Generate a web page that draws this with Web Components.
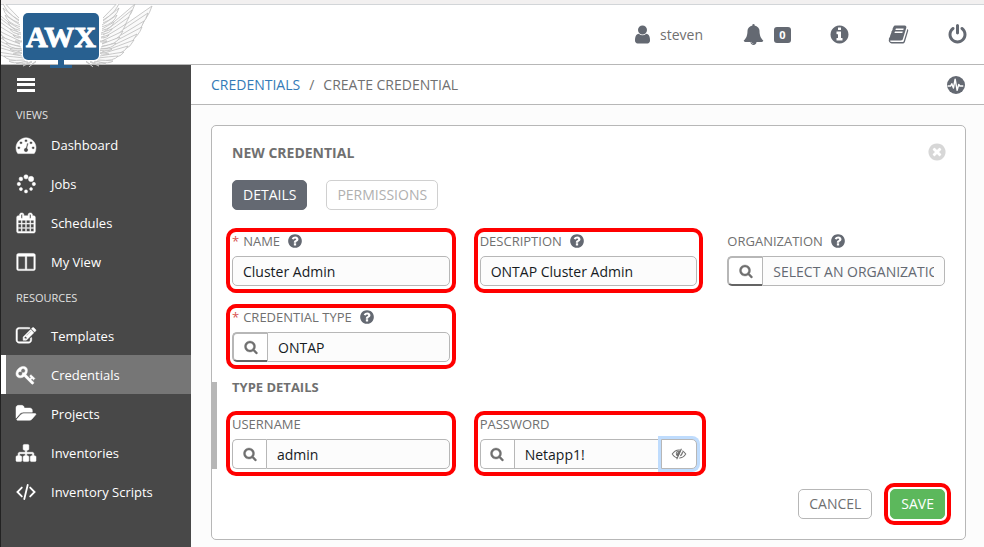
<!DOCTYPE html>
<html lang="en">
<head>
<meta charset="utf-8">
<title>AWX | Create Credential</title>
<style>
  :root { --line: #b7b7b7; --slate: #646972; --muted: #707070; --red: #f00; }
  * { box-sizing: border-box; }
  html, body { height: 100%; }
  body {
    margin: 0; background: #fcfcfc; color: var(--muted);
    font: 14px/20px "Open Sans", "Noto Sans", sans-serif;
    border-left: 1px solid #222;
  }
</style>
</head>
<body>
<awx-app></awx-app>
<script>
const RING = 'zm%M q0 209-103 385.5t-279.5 279.5-385.5 103-385.5-103-279.5-279.5-103-385.5 103-385.5 279.5-279.5 385.5-103 385.5 103 279.5 279.5 103 385.5z';
const disc = move => RING.replace('%M', move);
const p = d => `<path d="${d}"/>`;
const ICONS = {
  user: p('M1536 1399q0 109-62.5 187t-150.5 78h-854q-88 0-150.5-78t-62.5-187q0-85 8.5-160.5t31.5-152 58.5-131 94-89 134.5-34.5q131 128 313 128t313-128q76 0 134.5 34.5t94 89 58.5 131 31.5 152 8.5 160.5zm-256-887q0 159-112.5 271.5t-271.5 112.5-271.5-112.5-112.5-271.5 112.5-271.5 271.5-112.5 271.5 112.5 112.5 271.5z'),
  bell: p('M912 1696q0-16-16-16-59 0-101.5-42.5t-42.5-101.5q0-16-16-16t-16 16q0 73 51.5 124.5t124.5 51.5q16 0 16-16zm816-288q0 52-38 90t-90 38h-448q0 106-75 181t-181 75-181-75-75-181h-448q-52 0-90-38t-38-90q50-42 91-88t85-119.5 74.5-158.5 50-206 19.5-260q0-152 117-282.5t307-158.5q-8-19-8-39 0-40 28-68t68-28 68 28 28 68q0 20-8 39 190 28 307 158.5t117 282.5q0 139 19.5 260t50 206 74.5 158.5 85 119.5 91 88z'),
  info: p('M1152 1376v-160q0-14-9-23t-23-9h-96v-512q0-14-9-23t-23-9h-320q-14 0-23 9t-9 23v160q0 14 9 23t23 9h96v320h-96q-14 0-23 9t-9 23v160q0 14 9 23t23 9h448q14 0 23-9t9-23zm-128-896v-160q0-14-9-23t-23-9h-192q-14 0-23 9t-9 23v160q0 14 9 23t23 9h192q14 0 23-9t9-23' + disc('640 416')),
  help: p('M1024 1376v-192q0-14-9-23t-23-9h-192q-14 0-23 9t-9 23v192q0 14 9 23t23 9h192q14 0 23-9t9-23zm256-672q0-88-55.5-163t-138.5-116-170-41q-243 0-371 213-15 24 8 42l132 100q7 6 19 6 16 0 25-12 53-68 86-92 34-24 86-24 48 0 85.5 26t37.5 59q0 38-20 61t-68 45q-63 28-115.5 86.5t-52.5 125.5v36q0 14 9 23t23 9h192q14 0 23-9t9-23q0-19 21.5-49.5t54.5-49.5q32-18 49-28.5t46-35 44.5-48 28-60.5 12.5-81' + disc('384 192')),
  close: p('M1277 1122q0-26-19-45l-181-181 181-181q19-19 19-45 0-27-19-46l-90-90q-19-19-46-19-26 0-45 19l-181 181-181-181q-19-19-45-19-27 0-46 19l-90 90q-19 19-19 46 0 26 19 45l181 181-181 181q-19 19-19 45 0 27 19 46l90 90q19 19 46 19 26 0 45-19l181-181 181 181q19 19 45 19 27 0 46-19l90-90q19-19 19-46' + disc('387-226')),
  search: p('M1216 832q0-185-131.5-316.5t-316.5-131.5-316.5 131.5-131.5 316.5 131.5 316.5 316.5 131.5 316.5-131.5 131.5-316.5zm512 832q0 52-38 90t-90 38q-54 0-90-38l-343-342q-179 124-399 124-143 0-273.5-55.5t-225-150-150-225-55.5-273.5 55.5-273.5 150-225 225-150 273.5-55.5 273.5 55.5 225 150 150 225 55.5 273.5q0 220-124 399l343 343q37 37 37 90z'),
  power: p('M1664 896q0 156-61 298t-164 245-245 164-298 61-298-61-245-164-164-245-61-298q0-182 80.5-343t226.5-270q43-32 95.5-25t83.5 50q32 42 24.5 94.5t-49.5 84.5q-98 74-151.5 181t-53.5 228q0 104 40.5 198.5t109.5 163.5 163.5 109.5 198.5 40.5 198.5-40.5 163.5-109.5 109.5-163.5 40.5-198.5q0-121-53.5-228t-151.5-181q-42-32-49.5-84.5t24.5-94.5q31-43 84-50t95 25q146 109 226.5 270t80.5 343zm-640-768v640q0 52-38 90t-90 38-90-38-38-90v-640q0-52 38-90t90-38 90 38 38 90z'),
  book: p('M1703 478q40 57 18 129l-275 906q-19 64-76.5 107.5t-122.5 43.5h-923q-77 0-148.5-53.5t-99.5-131.5q-24-67-2-127 0-4 3-27t4-37q1-8-3-21.5t-3-19.5q2-11 8-21t16.5-23.5 16.5-23.5q23-38 45-91.5t30-91.5q3-10 .5-30t-.5-28q3-11 17-28t17-23q21-36 42-92t25-90q1-9-2.5-32t.5-28q4-13 22-30.5t22-22.5q19-26 42.5-84.5t27.5-96.5q1-8-3-25.5t-2-26.5q2-8 9-18t18-23 17-21q8-12 16.5-30.5t15-35 16-36 19.5-32 26.5-23.5 36-11.5 47.5 5.5l-1 3q38-9 51-9h761q74 0 114 56t18 130l-274 906q-36 119-71.5 153.5t-128.5 34.5h-869q-27 0-38 15-11 16-1 43 24 70 144 70h923q29 0 56-15.5t35-41.5l300-987q7-22 5-57 38 15 59 43zm-1064 2q-4 13 2 22.5t20 9.5h608q13 0 25.5-9.5t16.5-22.5l21-64q4-13-2-22.5t-20-9.5h-608q-13 0-25.5 9.5t-16.5 22.5zm-83 256q-4 13 2 22.5t20 9.5h608q13 0 25.5-9.5t16.5-22.5l21-64q4-13-2-22.5t-20-9.5h-608q-13 0-25.5 9.5t-16.5 22.5z'),
  dashboard: p('M384 1152q0-53-37.5-90.5t-90.5-37.5-90.5 37.5-37.5 90.5 37.5 90.5 90.5 37.5 90.5-37.5 37.5-90.5zm192-448q0-53-37.5-90.5t-90.5-37.5-90.5 37.5-37.5 90.5 37.5 90.5 90.5 37.5 90.5-37.5 37.5-90.5zm428 481l101-382q6-26-7.5-48.5t-38.5-29.5-48 6.5-30 39.5l-101 382q-60 5-107 43.5t-63 98.5q-20 77 20 146t117 89 146-20 89-117q16-60-6-117t-72-91zm660-33q0-53-37.5-90.5t-90.5-37.5-90.5 37.5-37.5 90.5 37.5 90.5 90.5 37.5 90.5-37.5 37.5-90.5zm-640-640q0-53-37.5-90.5t-90.5-37.5-90.5 37.5-37.5 90.5 37.5 90.5 90.5 37.5 90.5-37.5 37.5-90.5zm448 192q0-53-37.5-90.5t-90.5-37.5-90.5 37.5-37.5 90.5 37.5 90.5 90.5 37.5 90.5-37.5 37.5-90.5zm320 448q0 261-141 483-19 29-54 29h-1402q-35 0-54-29-141-221-141-483 0-182 71-348t191-286 286-191 348-71 348 71 286 191 191 286 71 348z'),
  jobs: '<circle cx="896" cy="256" r="190"/><circle cx="1350" cy="440" r="235"/><circle cx="1600" cy="896" r="150"/><circle cx="1350" cy="1350" r="130"/><circle cx="896" cy="1560" r="140"/><circle cx="440" cy="1350" r="140"/><circle cx="256" cy="896" r="150"/><circle cx="440" cy="440" r="165"/>',
  schedules: p('M192 1664h288v-288h-288v288zm352 0h320v-288h-320v288zm-352-352h288v-320h-288v320zm352 0h320v-320h-320v320zm-352-384h288v-288h-288v288zm736 736h320v-288h-320v288zm-384-736h320v-288h-320v288zm768 736h288v-288h-288v288zm-384-352h320v-320h-320v320zm-352-864v-288q0-13-9.5-22.5t-22.5-9.5h-64q-13 0-22.5 9.5t-9.5 22.5v288q0 13 9.5 22.5t22.5 9.5h64q13 0 22.5-9.5t9.5-22.5zm736 864h288v-320h-288v320zm-384-384h320v-288h-320v288zm384 0h288v-288h-288v288zm32-480v-288q0-13-9.5-22.5t-22.5-9.5h-64q-13 0-22.5 9.5t-9.5 22.5v288q0 13 9.5 22.5t22.5 9.5h64q13 0 22.5-9.5t9.5-22.5zm384-64v1280q0 52-38 90t-90 38h-1408q-52 0-90-38t-38-90v-1280q0-52 38-90t90-38h128v-96q0-66 47-113t113-47h64q66 0 113 47t47 113v96h384v-96q0-66 47-113t113-47h64q66 0 113 47t47 113v96h128q52 0 90 38t38 90z'),
  view: p('M224 1536h608v-1152h-640v1120q0 13 9.5 22.5t22.5 9.5zm1376-32v-1120h-640v1152h608q13 0 22.5-9.5t9.5-22.5zm128-1216v1216q0 66-47 113t-113 47h-1344q-66 0-113-47t-47-113v-1216q0-66 47-113t113-47h1344q66 0 113 47t47 113z'),
  templates: p('M888 1184l116-116-152-152-116 116v56h96v96h56zm440-720q-16-16-33 1l-350 350q-17 17-1 33t33-1l350-350q17-17 1-33zm80 594v190q0 119-84.5 203.5t-203.5 84.5h-832q-119 0-203.5-84.5t-84.5-203.5v-832q0-119 84.5-203.5t203.5-84.5h832q63 0 117 25 15 7 18 23 3 17-9 29l-49 49q-14 14-32 8-23-6-45-6h-832q-66 0-113 47t-47 113v832q0 66 47 113t113 47h832q66 0 113-47t47-113v-126q0-13 9-22l64-64q15-15 35-7t20 29zm-96-738l288 288-672 672h-288v-288zm444 132l-92 92-288-288 92-92q28-28 68-28t68 28l152 152q28 28 28 68t-28 68z'),
  key: p('M832 512q0-80-56-136t-136-56-136 56-56 136q0 42 19 83-41-19-83-19-80 0-136 56t-56 136 56 136 136 56 136-56 56-136q0-42-19-83 41 19 83 19 80 0 136-56t56-136zm851 704q0 17-49 66t-66 49q-9 0-28.5-16t-36.5-33-38.5-40-24.5-26l-96 96 220 220q28 28 28 68 0 42-39 81t-81 39q-40 0-68-28l-671-671q-176 131-365 131-163 0-265.5-102.5t-102.5-265.5q0-160 95-313t248-248 313-95q163 0 265.5 102.5t102.5 265.5q0 189-131 365l355 355 96-96q-3-3-26-24.5t-40-38.5-33-36.5-16-28.5q0-17 49-66t66-49q13 0 23 10 6 6 46 44.5t82 79.5 86.5 86 73 78 28.5 41z'),
  folder: '<g transform="scale(.953)">' + p('M1879 952q0 31-31 66l-336 396q-43 51-120.5 86.5t-143.5 35.5h-1088q-34 0-60.5-13t-26.5-43q0-31 31-66l336-396q43-51 120.5-86.5t143.5-35.5h1088q34 0 60.5 13t26.5 43zm-343-344v160h-832q-94 0-197 47.5t-164 119.5l-337 396-5 6q0-4-.5-12.5t-.5-12.5v-960q0-92 66-158t158-66h320q92 0 158 66t66 158v32h544q92 0 158 66t66 158z') + '</g>',
  sitemap: p('M1792 1248v320q0 40-28 68t-68 28h-320q-40 0-68-28t-28-68v-320q0-40 28-68t68-28h96v-192h-512v192h96q40 0 68 28t28 68v320q0 40-28 68t-68 28h-320q-40 0-68-28t-28-68v-320q0-40 28-68t68-28h96v-192h-512v192h96q40 0 68 28t28 68v320q0 40-28 68t-68 28h-320q-40 0-68-28t-28-68v-320q0-40 28-68t68-28h96v-192q0-52 38-90t90-38h512v-192h-96q-40 0-68-28t-28-68v-320q0-40 28-68t68-28h320q40 0 68 28t28 68v320q0 40-28 68t-68 28h-96v192h512q52 0 90 38t38 90v192h96q40 0 68 28t28 68z'),
  code: '<path d="M520 500L130 896l390 396M1272 500l390 396-390 396M1050 260L742 1530" fill="none" stroke="currentColor" stroke-width="165" stroke-linecap="round"/>',
  bars: '<path shape-rendering="crispEdges" d="M90 225h1612v269H90zM90 718h1612v269H90zM90 1210h1612v269H90z"/>',
  activity: '<circle cx="896" cy="896" r="896"/><path d="M60 1000h290l130-230 160 430 170-890 200 1120 160-580 120 150h330" fill="none" stroke="#fff" stroke-width="140" stroke-linejoin="round"/>',
  eye: '<path d="M30 896q350-520 866-520 516 0 866 520-350 520-866 520-516 0-866-520z" fill="none" stroke="currentColor" stroke-width="130"/><circle cx="860" cy="840" r="370"/><path d="M800 620q-170 40-170 220" fill="none" stroke="#fff" stroke-width="80"/><path d="M1330 260L760 1560" stroke="#fff" stroke-width="170"/><path d="M1210 220L600 1560M1340 640q30 270-230 480" fill="none" stroke="currentColor" stroke-width="130"/>'
};

const RESET = '*,*::before,*::after{box-sizing:border-box}';
function define(name, css, html) {
  customElements.define(name, class extends HTMLElement {
    constructor() {
      super();
      this.attachShadow({ mode: 'open' });
    }
    connectedCallback() {
      this.shadowRoot.innerHTML = `<style>${RESET}${css}</style>${typeof html === 'function' ? html(this) : html}`;
    }
  });
}

define('awx-icon', `
  :host { display: inline-block; width: 20px; height: 20px; flex: none; }
  svg { display: block; width: 100%; height: 100%; fill: currentColor; overflow: visible; }
  :host([bold]) svg { stroke: currentColor; stroke-width: 45; }
`, el => `<svg viewBox="0 0 1792 1792" aria-hidden="true">${ICONS[el.getAttribute('name')]}</svg>`);

/* Each feather is [root x, root y, tip x, tip y]; outer rows are painted first. */
const FEATHERS = [
  [104, 34, 151, 2], [104, 37, 147, 9], [103, 41, 143, 17], [103, 43, 141, 23], [102, 46, 136, 30], [101, 48, 133, 36],
  [100, 50, 127, 42], [99, 52, 123, 48], [97, 54, 117, 52], [96, 56, 112, 57], [93, 57, 105, 60], [89, 57, 98, 62], [85, 57, 92, 63],
  [103, 26, 134, 0], [103, 28, 131, 6], [102, 31, 128, 13], [102, 34, 125, 20], [101, 37, 122, 27], [101, 40, 119, 33],
  [100, 43, 115, 39], [99, 45, 111, 45], [98, 48, 108, 50],
  [102, 14, 119, -4], [102, 17, 118, 4], [101, 21, 116, 11], [101, 25, 113, 18], [100, 29, 111, 25], [100, 33, 108, 31], [99, 37, 106, 37]
];
const feather = ([x, y, tx, ty]) => {
  const w = tx - x, mx = x + w * .55, my = (y + ty) / 2;
  return `<path d="M${x} ${y}Q${mx} ${my - w * .02} ${tx} ${ty}Q${mx + w * .28} ${my + w * .22} ${x} ${y + w * .12}"/>`;
};
const WING = FEATHERS.map(feather).join('');
define('awx-logo', `
  :host { display: block; width: 156px; height: 64px; }
  svg { display: block; overflow: hidden; }
  .wing { fill: #fafafa; stroke: #bdbdbd; stroke-width: .8; }
  text { font: bold 30px "Liberation Serif", serif; fill: #fff; stroke: #fff; stroke-width: 1; }
`, `
<svg width="156" height="64" viewBox="0 0 156 64" role="img" aria-label="AWX">
  <g class="wing">${WING}</g>
  <g class="wing" transform="translate(120 0) scale(-1 1)">${WING}</g>
  <rect x="21" y="8" width="78" height="49" rx="6" fill="#fff"/>
  <path d="M57 54h6v7h8v3H49v-3h8z" fill="#286090"/>
  <rect x="22" y="9" width="76" height="47" rx="5" fill="#286090"/>
  <text x="60" y="43" text-anchor="middle">AWX</text>
</svg>`);

define('awx-header', `
  :host { display: flex; align-items: flex-start; justify-content: space-between; height: 65px;
    background: #fff; border-top: 4px solid #f2f0f0; border-bottom: 1px solid var(--line); }
  .tools { flex: 1; height: 60px; display: flex; align-items: center; justify-content: flex-end; gap: 38px;
    padding-right: 16px; border-top: 1px solid #d2d5d8; }
  button { display: flex; align-items: center; border: 0; padding: 0; background: none; color: var(--slate); font: inherit; }
  .user { gap: 7px; padding-right: 2px; }
  .user span { color: var(--muted); }
  .bell { gap: 10px; }
  .badge { background: var(--slate); color: #fff; border-radius: 3px; width: 17px; height: 16px;
    font: bold 11px/16px "Open Sans", sans-serif; text-align: center; }
  awx-icon { width: 21px; height: 21px; }
  awx-logo { position: relative; z-index: 1; margin-right: -156px; }
`, `
<awx-logo></awx-logo>
<div class="tools">
  <button class="user"><awx-icon name="user"></awx-icon><span>steven</span></button>
  <button class="bell" aria-label="Notifications"><awx-icon name="bell"></awx-icon><span class="badge">0</span></button>
  <button aria-label="About"><awx-icon name="info"></awx-icon></button>
  <button aria-label="Documentation"><awx-icon name="book"></awx-icon></button>
  <button aria-label="Log out"><awx-icon name="power"></awx-icon></button>
</div>`);

define('awx-nav-item', `
  :host { display: block; }
  a { display: flex; align-items: center; gap: 15px; height: 39px; padding: 0 10px; color: #fff;
    border-left: 5px solid transparent; font-size: 13px; text-decoration: none; }
  :host([selected]) a { background: #767676; border-left-color: #fff; }
`, el => `<a href="#${el.getAttribute('icon')}"><awx-icon name="${el.getAttribute('icon')}" bold></awx-icon><span><slot></slot></span></a>`);

define('awx-sidebar', `
  :host { display: block; background: #484848; }
  button { display: flex; align-items: center; height: 39px; padding: 0 15px; border: 0; background: none; color: #fff; }
  h2 { margin: 0; padding: 1px 0 0 15px; font-weight: 400; font-size: 11px; line-height: 20px; color: #e0e0e0; }
  awx-nav-item + h2 { padding: 7px 0 8px 15px; }
`, `
<button aria-label="Toggle menu"><awx-icon name="bars"></awx-icon></button>
<nav>
  <h2>VIEWS</h2>
  <awx-nav-item icon="dashboard">Dashboard</awx-nav-item>
  <awx-nav-item icon="jobs">Jobs</awx-nav-item>
  <awx-nav-item icon="schedules">Schedules</awx-nav-item>
  <awx-nav-item icon="view">My View</awx-nav-item>
  <h2>RESOURCES</h2>
  <awx-nav-item icon="templates">Templates</awx-nav-item>
  <awx-nav-item icon="key" selected>Credentials</awx-nav-item>
  <awx-nav-item icon="folder">Projects</awx-nav-item>
  <awx-nav-item icon="sitemap">Inventories</awx-nav-item>
  <awx-nav-item icon="code">Inventory Scripts</awx-nav-item>
</nav>`);

define('awx-breadcrumb', `
  :host { display: flex; align-items: center; justify-content: space-between; height: 40px;
    padding: 0 19px 0 20px; background: #fff; border-bottom: 1px solid var(--line); }
  nav { display: flex; gap: 9px; }
  a { color: #337ab7; text-decoration: none; }
  button { border: 0; padding: 0; background: none; color: var(--slate); display: flex; }
  awx-icon { width: 18px; height: 18px; }
`, `
<nav aria-label="Breadcrumb"><a href="#credentials">CREDENTIALS</a><span>/</span><span>CREATE CREDENTIAL</span></nav>
<button aria-label="Activity stream"><awx-icon name="activity"></awx-icon></button>`);

define('awx-button', `
  :host { display: block; position: relative; }
  button { display: block; height: 30px; padding: 0 10px; border: 1px solid var(--line); border-radius: 5px;
    background: #fff; color: var(--muted); font: inherit; line-height: 28px; }
  :host([kind=active]) button { background: var(--slate); border-color: var(--slate); color: #fff; }
  :host([kind=disabled]) button { border-color: #d0d0d0; color: #b0b0b0; }
  :host([kind=primary]) button { background: #5cb85c; border-color: #5cb85c; color: #fff; }
  :host([marked])::after { content: ""; position: absolute; inset: -6px; border: 4px solid var(--red);
    border-radius: 10px; pointer-events: none; }
`, `<button type="button"><slot></slot></button>`);

/* Text field with optional lookup button, help mark, reveal button and highlight frame. */
define('awx-field', `
  :host { display: block; position: relative; min-width: 0; }
  :host([marked])::after { content: ""; position: absolute; inset: -2px -6px -7px; border: 4px solid var(--red);
    border-radius: 10px; pointer-events: none; }
  :host([reveal])::after { right: -9px; }
  .label { display: flex; align-items: center; height: 22px; margin-bottom: 4px; font-size: 13px; }
  .req { color: #d9534f; margin-right: 4px; }
  .label awx-icon { width: 16px; height: 16px; margin-left: 7px; color: var(--slate); }
  .box { display: flex; height: 30px; }
  input { flex: 1; min-width: 0; width: 0; height: 30px; padding: 0 10px; border: 1px solid var(--line);
    border-radius: 5px; background: #fcfcfc; color: #161b1f; font: inherit; outline: 0; }
  input::placeholder { color: var(--slate); opacity: 1; }
  button { display: flex; align-items: center; justify-content: center; width: 34px; padding: 0;
    border: 1px solid var(--line); background: #fff; color: var(--muted); }
  button awx-icon { width: 14px; height: 14px; }
  .find { border-right: 0; border-radius: 5px 0 0 5px; }
  .find + input { border-radius: 0 5px 5px 0; }
  :host([raised]) .find { width: 35px; border-width: 2px 0 2px 2px; border-bottom-color: #646464; }
  .find + input:not(:last-child) { border-radius: 0; border-right: 0; }
  .show { border-radius: 0 5px 5px 0; box-shadow: 0 0 0 3px #bfdcfd; width: 36px; }
`, el => {
  const a = n => el.getAttribute(n) || '';
  const has = n => el.hasAttribute(n);
  return `
<div class="label">${has('required') ? '<span class="req">*</span>' : ''}<label for="f">${a('label')}</label>${has('help') ? '<awx-icon name="help"></awx-icon>' : ''}</div>
<div class="box">${has('lookup') ? '<button class="find" type="button" aria-label="Look up"><awx-icon name="search" bold></awx-icon></button>' : ''}<input id="f" type="text" value="${a('value')}" placeholder="${a('placeholder')}">${has('reveal') ? '<button class="show" type="button" aria-label="Hide password"><awx-icon name="eye"></awx-icon></button>' : ''}</div>`;
});

define('awx-credential-form', `
  :host { display: block; margin: 20px 18px 0 20px; padding: 20px; background: #fff;
    border: 1px solid var(--line); border-radius: 5px; }
  header { display: flex; justify-content: space-between; height: 14px; }
  h1, h2 { margin: 0; font-size: 14px; font-weight: 700; line-height: 14px; }
  .close { display: flex; align-items: center; height: 12px; border: 0; padding: 0; margin-right: -2px; background: none; color: #d7d7d7; }
  .close awx-icon { width: 20px; height: 20px; }
  .tabs { display: flex; gap: 19px; margin: 20px 0; }
  .grid { display: grid; grid-template-columns: repeat(3, minmax(0, 1fr)); gap: 20px 30px; }
  section { margin: 20px 0 0 -20px; padding-left: 15px; border-left: 5px solid var(--line); }
  h2 { font-size: 13px; line-height: 10px; margin-bottom: 21px; }
  footer { display: flex; justify-content: flex-end; gap: 18px; margin-top: 20px; }
`, `
<header><h1>NEW CREDENTIAL</h1><button class="close" aria-label="Close"><awx-icon name="close"></awx-icon></button></header>
<div class="tabs"><awx-button kind="active">DETAILS</awx-button><awx-button kind="disabled">PERMISSIONS</awx-button></div>
<div class="grid">
  <awx-field label="NAME" required help marked value="Cluster Admin"></awx-field>
  <awx-field label="DESCRIPTION" help marked value="ONTAP Cluster Admin"></awx-field>
  <awx-field label="ORGANIZATION" help lookup raised placeholder="SELECT AN ORGANIZATION"></awx-field>
  <awx-field label="CREDENTIAL TYPE" required help marked lookup raised value="ONTAP"></awx-field>
</div>
<section>
  <h2>TYPE DETAILS</h2>
  <div class="grid">
    <awx-field label="USERNAME" marked lookup value="admin"></awx-field>
    <awx-field label="PASSWORD" marked lookup reveal value="Netapp1!"></awx-field>
  </div>
</section>
<footer><awx-button>CANCEL</awx-button><awx-button kind="primary" marked>SAVE</awx-button></footer>`);

define('awx-app', `
  :host { display: grid; grid-template: auto 1fr / 190px minmax(0, 1fr); min-height: 100vh; }
  awx-header { grid-column: 1 / -1; }
`, `
<awx-header></awx-header>
<awx-sidebar></awx-sidebar>
<main><awx-breadcrumb></awx-breadcrumb><awx-credential-form></awx-credential-form></main>`);
</script>
</body>
</html>
